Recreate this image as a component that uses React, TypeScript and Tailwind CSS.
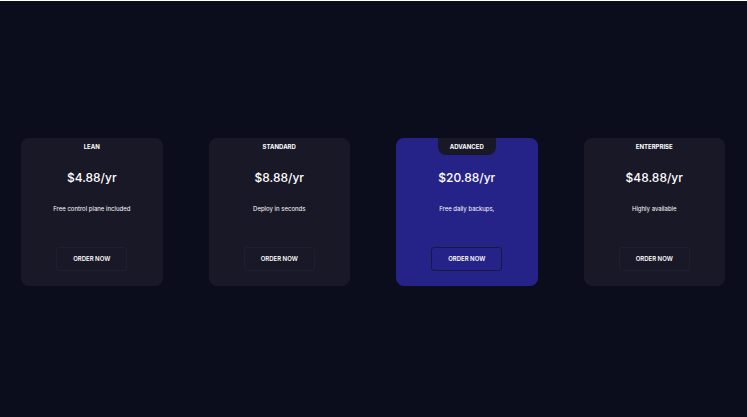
type Plan = { name: string; price: string; note: string; featured?: boolean };

const plans: Plan[] = [
  { name: "LEAN", price: "$4.88/yr", note: "Free control plane included" },
  { name: "STANDARD", price: "$8.88/yr", note: "Deploy in seconds" },
  { name: "ADVANCED", price: "$20.88/yr", note: "Free daily backups,", featured: true },
  { name: "ENTERPRISE", price: "$48.88/yr", note: "Highly available" },
];

function PlanCard({ name, price, note, featured }: Plan) {
  return (
    <article
      className={`flex flex-col items-center rounded-lg pb-[15px] ${featured ? "bg-[#262388]" : "bg-[#191826]"}`}
    >
      <h2 className="rounded-b-lg bg-[#191826] px-3 pt-1 pb-1 text-[6px] leading-[9px] font-bold">
        {name}
      </h2>
      <p className="mt-4 text-[12px] leading-[14px] font-medium">{price}</p>
      <p className="mt-5 text-[6px] leading-[8px]">{note}</p>
      <button
        type="button"
        className={`mt-[34px] h-6 w-[71px] rounded-[3px] border text-[6px] leading-[8px] font-semibold ${featured ? "border-[#191840]" : "border-[#1e1f30]"}`}
      >
        ORDER NOW
      </button>
    </article>
  );
}

export default function App() {
  return (
    <main className="flex min-h-screen flex-col justify-center border-t border-white bg-[#0b0c1c] font-['Inter',sans-serif] text-white">
      <section className="grid grid-cols-4 gap-[46px] pt-[6px] pr-[22px] pl-[21px]">
        {plans.map((plan) => (
          <PlanCard key={plan.name} {...plan} />
        ))}
      </section>
    </main>
  );
}
